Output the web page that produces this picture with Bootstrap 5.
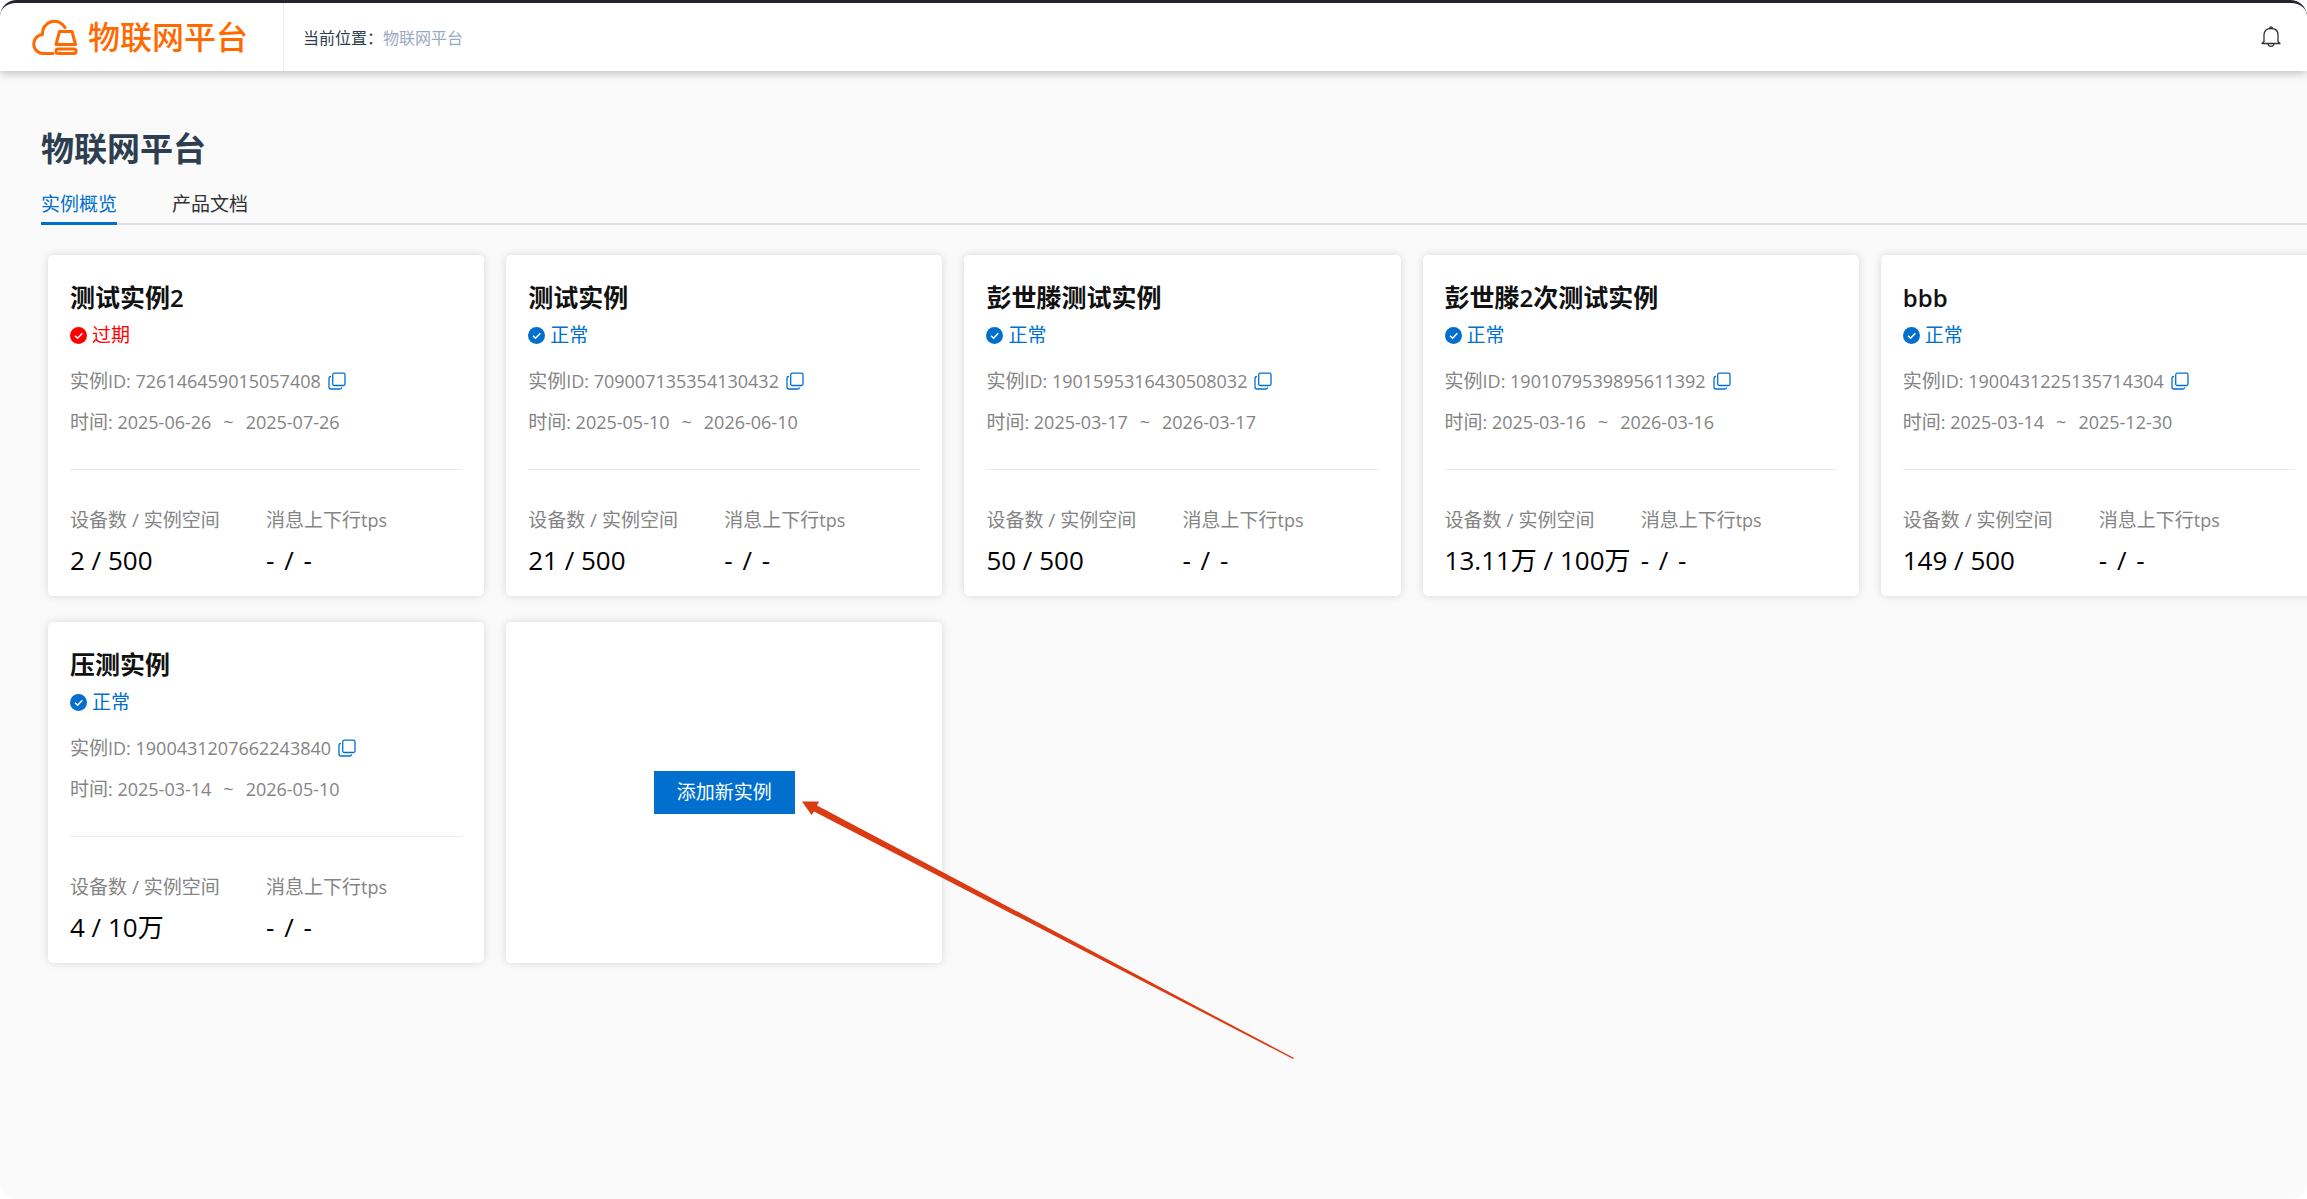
<!DOCTYPE html>
<html lang="zh-CN">
<head>
<meta charset="utf-8">
<meta name="viewport" content="width=device-width, initial-scale=1">
<title>物联网平台</title>
<link href="https://cdn.jsdelivr.net/npm/bootstrap@5.3.0/dist/css/bootstrap.min.css" rel="stylesheet">
<style>
  :root { --brand: #ff6a00; --accent: #006fce; }
  body { font-family: "Open Sans", "Noto Sans CJK SC", sans-serif; background: #fff; color: #000; overflow-x: hidden; }
  .app-shell { background: #fafafa; border-radius: 16px; overflow: hidden; }
  .topbar { height: 71px; border-top: 3px solid #25232d; background: #fff; border-radius: 16px 16px 0 0; box-shadow: 0 2px 10px rgba(0, 0, 0, .25); }
  .brand-box { width: 284px; padding-left: 32px; gap: 10px; border-right: 1px solid #eee; }
  .brand-box, .brand-box:hover { color: var(--brand); }
  .brand-text { font-size: 32px; line-height: 40px; font-weight: 500; }
  .crumbs { font-size: 16px; padding: 2px 0 0 19px; color: #2c3e50; }
  .crumbs a { color: #99a9bf; }
  .bell { margin-right: 26px; line-height: 0; }
  .page { padding: 56px 0 40px 41px; }
  .page-title { font-size: 33px; line-height: 44px; color: #2c3e50; }
  .tabs { gap: 55px; margin-top: 19px; border-bottom: 2px solid #dfe2ea; }
  .tabs a { font-size: 19px; line-height: 28px; padding-bottom: 4px; margin-bottom: -2px; color: #303133; border-bottom: 3px solid transparent; }
  .tabs a.active { color: var(--accent); border-color: var(--accent); }
  .instances { --bs-gutter-x: 22px; --bs-gutter-y: 26px; margin: 4px -21px 0 -4px; }
  .instance { min-height: 341px; padding: 26px 22px 17px; background: #fff; border-radius: 5px; box-shadow: 0 0 8px rgba(0, 0, 0, .14); font-size: 19px; line-height: 28px; }
  .instance h2 { font-size: 25px; line-height: 32px; margin: 0 0 8px; font-weight: 700; color: #111; }
  .instance h2 span { font-size: 24px; line-height: 24px; font-weight: 600; }
  .state { gap: 5px; color: var(--accent); margin-bottom: 18px; }
  .state.expired { color: #f00; }
  .meta { color: #848484; margin-bottom: 13px; }
  .num { font-size: 18px; line-height: 24px; }
  .tilde { margin: 0 12px; }
  .copy { margin-left: 7px; color: var(--accent); line-height: 0; }
  .stats { margin-top: 33px; padding-top: 36px; border-top: 1px solid #ebebeb; }
  .stats dt { font-weight: 400; color: #848484; margin-bottom: 8px; }
  .stats dd { font-size: 26px; line-height: 36px; margin: 0; white-space: nowrap; }
  .stats dd span { margin: 0 3px; }
  .add-panel { padding: 0; }
  .add-btn { font-size: 19px; line-height: 27px; padding: 8px 23px; border: 0; border-radius: 0; background: var(--accent); color: #fff; }
  .pointer { left: calc(50% + 78px); top: calc(50% + 8px); z-index: 2; pointer-events: none; }
</style>
</head>
<body>
<svg class="d-none" xmlns="http://www.w3.org/2000/svg">
  <symbol id="i-check" viewBox="0 0 17 17"><circle cx="8.5" cy="8.5" r="8.5" fill="currentColor"/><path d="M5 8.800l2.600 2.500L12.300 6.300" fill="none" stroke="#fff" stroke-width="1.500"/></symbol>
  <symbol id="i-copy" viewBox="0 0 18 18"><rect x="4.700" y="1.200" width="12.300" height="12.300" rx="1.500" fill="none" stroke="currentColor" stroke-width="1.300"/><path d="M3 4.300Q1 4.500 1 6.500V15Q1 17 3 17H11.500Q13.300 17 13.700 15.300" fill="none" stroke="currentColor" stroke-width="1.300"/></symbol>
</svg>
<div class="app-shell d-flex flex-column min-vh-100">
  <header class="topbar d-flex align-items-stretch">
    <a class="brand-box d-flex align-items-center text-decoration-none" href="#">
      <svg width="46" height="38" viewBox="0 0 46 38" fill="none" stroke="currentColor" stroke-width="3" stroke-linecap="round" stroke-linejoin="round" aria-hidden="true">
        <path d="M21 35.500H12A9.500 9.500 0 0 1 10.500 16.500A12 12 0 0 1 33 9.500"/>
        <path d="M27.500 13.500H40L43.500 26.500H24Z"/><rect x="24" y="31" width="20" height="4.500" rx="2"/>
      </svg>
      <span class="brand-text">物联网平台</span>
    </a>
    <nav class="crumbs d-flex align-items-center" aria-label="当前位置"><span>当前位置：</span><a class="text-decoration-none" href="#">物联网平台</a></nav>
    <button class="bell btn p-0 border-0 ms-auto align-self-center" type="button" aria-label="通知">
      <svg width="20" height="22" viewBox="0 0 20 22" fill="none" stroke="#333" stroke-width="1.300" stroke-linejoin="round"><path d="M1 17.500L3 15.500V9Q3 2.500 10 2.500T17 9V15.500L19 17.500Z"/><path d="M8.800 2.500V1.500Q10 .3 11.200 1.500V2.500M7 17.800Q7.500 20.300 10 20.300T13 17.800"/></svg>
    </button>
  </header>
  <main class="page flex-grow-1">
    <h1 class="page-title fw-bold mb-0">物联网平台</h1>
    <nav class="tabs d-flex"><a class="active text-decoration-none" href="#" aria-current="page">实例概览</a><a class="text-decoration-none" href="#">产品文档</a></nav>
    <div class="instances row row-cols-5">
      <div class="col"><article class="instance">
        <h2>测试实例<span>2</span></h2>
        <div class="state expired d-flex align-items-center"><svg width="17" height="17"><use href="#i-check"/></svg>过期</div>
        <div class="meta d-flex align-items-center">实例<span class="num">ID: 726146459015057408</span><button class="copy btn p-0 border-0" type="button" aria-label="复制"><svg width="18" height="18"><use href="#i-copy"/></svg></button></div>
        <div class="meta">时间<span class="num">: 2025-06-26<span class="tilde">~</span>2025-07-26</span></div>
        <dl class="stats d-flex mb-0"><div class="w-50"><dt>设备数 / 实例空间</dt><dd>2 / 500</dd></div><div class="w-50"><dt>消息上下行<span class="num">tps</span></dt><dd>- <span>/</span> -</dd></div></dl>
      </article></div>
      <div class="col"><article class="instance">
        <h2>测试实例</h2>
        <div class="state d-flex align-items-center"><svg width="17" height="17"><use href="#i-check"/></svg>正常</div>
        <div class="meta d-flex align-items-center">实例<span class="num">ID: 709007135354130432</span><button class="copy btn p-0 border-0" type="button" aria-label="复制"><svg width="18" height="18"><use href="#i-copy"/></svg></button></div>
        <div class="meta">时间<span class="num">: 2025-05-10<span class="tilde">~</span>2026-06-10</span></div>
        <dl class="stats d-flex mb-0"><div class="w-50"><dt>设备数 / 实例空间</dt><dd>21 / 500</dd></div><div class="w-50"><dt>消息上下行<span class="num">tps</span></dt><dd>- <span>/</span> -</dd></div></dl>
      </article></div>
      <div class="col"><article class="instance">
        <h2>彭世滕测试实例</h2>
        <div class="state d-flex align-items-center"><svg width="17" height="17"><use href="#i-check"/></svg>正常</div>
        <div class="meta d-flex align-items-center">实例<span class="num">ID: 1901595316430508032</span><button class="copy btn p-0 border-0" type="button" aria-label="复制"><svg width="18" height="18"><use href="#i-copy"/></svg></button></div>
        <div class="meta">时间<span class="num">: 2025-03-17<span class="tilde">~</span>2026-03-17</span></div>
        <dl class="stats d-flex mb-0"><div class="w-50"><dt>设备数 / 实例空间</dt><dd>50 / 500</dd></div><div class="w-50"><dt>消息上下行<span class="num">tps</span></dt><dd>- <span>/</span> -</dd></div></dl>
      </article></div>
      <div class="col"><article class="instance">
        <h2>彭世滕<span>2</span>次测试实例</h2>
        <div class="state d-flex align-items-center"><svg width="17" height="17"><use href="#i-check"/></svg>正常</div>
        <div class="meta d-flex align-items-center">实例<span class="num">ID: 1901079539895611392</span><button class="copy btn p-0 border-0" type="button" aria-label="复制"><svg width="18" height="18"><use href="#i-copy"/></svg></button></div>
        <div class="meta">时间<span class="num">: 2025-03-16<span class="tilde">~</span>2026-03-16</span></div>
        <dl class="stats d-flex mb-0"><div class="w-50"><dt>设备数 / 实例空间</dt><dd>13.11万 / 100万</dd></div><div class="w-50"><dt>消息上下行<span class="num">tps</span></dt><dd>- <span>/</span> -</dd></div></dl>
      </article></div>
      <div class="col"><article class="instance">
        <h2><span>bbb</span></h2>
        <div class="state d-flex align-items-center"><svg width="17" height="17"><use href="#i-check"/></svg>正常</div>
        <div class="meta d-flex align-items-center">实例<span class="num">ID: 1900431225135714304</span><button class="copy btn p-0 border-0" type="button" aria-label="复制"><svg width="18" height="18"><use href="#i-copy"/></svg></button></div>
        <div class="meta">时间<span class="num">: 2025-03-14<span class="tilde">~</span>2025-12-30</span></div>
        <dl class="stats d-flex mb-0"><div class="w-50"><dt>设备数 / 实例空间</dt><dd>149 / 500</dd></div><div class="w-50"><dt>消息上下行<span class="num">tps</span></dt><dd>- <span>/</span> -</dd></div></dl>
      </article></div>
      <div class="col"><article class="instance">
        <h2>压测实例</h2>
        <div class="state d-flex align-items-center"><svg width="17" height="17"><use href="#i-check"/></svg>正常</div>
        <div class="meta d-flex align-items-center">实例<span class="num">ID: 1900431207662243840</span><button class="copy btn p-0 border-0" type="button" aria-label="复制"><svg width="18" height="18"><use href="#i-copy"/></svg></button></div>
        <div class="meta">时间<span class="num">: 2025-03-14<span class="tilde">~</span>2026-05-10</span></div>
        <dl class="stats d-flex mb-0"><div class="w-50"><dt>设备数 / 实例空间</dt><dd>4 / 10万</dd></div><div class="w-50"><dt>消息上下行<span class="num">tps</span></dt><dd>- <span>/</span> -</dd></div></dl>
      </article></div>
      <div class="col"><article class="instance add-panel position-relative d-flex align-items-center justify-content-center h-100">
        <button class="add-btn btn" type="button">添加新实例</button>
        <svg class="pointer position-absolute" width="494" height="260" viewBox="0 0 494 260" aria-hidden="true"><path d="M0 .5H17L15 4.500L492 257L491 258L12 10.500L9.500 14Z" fill="#db3b12"/></svg>
      </article></div>
    </div>
  </main>
</div>
<script src="https://cdn.jsdelivr.net/npm/bootstrap@5.3.0/dist/js/bootstrap.bundle.min.js"></script>
</body>
</html>
